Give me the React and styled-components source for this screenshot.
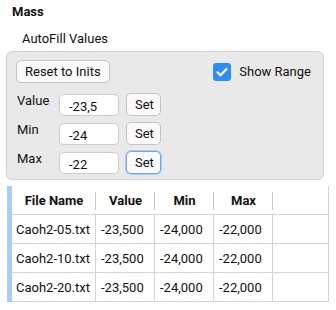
import styled, { createGlobalStyle } from "styled-components";

const Global = createGlobalStyle`
  body {
    margin: 0;
    background: #fff;
    font-family: Roboto, "Liberation Sans", sans-serif;
    font-size: 13px;
    color: #111;
  }
`;

const Page = styled.div`
  width: 336px;
  padding: 2px 7px 0 6px;
  box-sizing: border-box;
`;

const Title = styled.div`
  font-weight: bold;
  font-size: 13px;
  padding-left: 6px;
  height: 20px;
  line-height: 20px;
`;

const SubTitle = styled.div`
  padding-left: 16px;
  height: 25px;
  line-height: 25px;
  margin-top: 4px;
`;

const Panel = styled.div`
  margin-right: 5px;
  background: #e9e9e9;
  border: 1px solid #d2d2d2;
  border-radius: 6px;
  padding: 8px 9px 5px 9px;
  display: flex;
  flex-direction: column;
  gap: 6px;
`;

const TopRow = styled.div`
  display: flex;
  justify-content: space-between;
  align-items: center;
  margin-bottom: 4px;
`;

const Button = styled.button`
  font-family: inherit;
  font-size: 13px;
  color: #111;
  background: #fafafa;
  border: 1px solid ${(p) => (p.$focus ? "#6ea8ee" : "#c4c4c4")};
  box-shadow: ${(p) => (p.$focus ? "0 0 0 1px #a9cdf6" : "none")};
  border-radius: 5px;
  height: 23px;
  padding: 0 8px;
  line-height: 20px;
`;

const Check = styled.label`
  display: flex;
  align-items: center;
  gap: 8px;
  margin-right: 3px;
`;

const Box = styled.span`
  width: 18px;
  height: 18px;
  border-radius: 3px;
  background: #2f8ef4;
  display: flex;
  align-items: center;
  justify-content: center;
`;

const Field = styled.div`
  display: grid;
  grid-template-columns: 36px 60px 35px;
  column-gap: 7px;
  align-items: center;
`;

const Label = styled.span`
  align-self: start;
  line-height: 16px;
  padding-left: 1px;
`;

const Input = styled.div`
  height: 22px;
  line-height: 24px;
  background: #fff;
  border: 1px solid #cdcdcd;
  border-radius: 5px;
  padding-left: 9px;
  box-sizing: border-box;
`;

const Table = styled.table`
  margin: 6px 0 0 1px;
  width: 322px;
  border-collapse: separate;
  border-spacing: 0;
  border-left: 5px solid #a9cdf7;
  border-right: 1px solid #d4d4d4;
  table-layout: fixed;
`;

const Th = styled.th`
  height: 28px;
  text-align: center;
  font-weight: bold;
  padding: 0;
  position: relative;
  border-bottom: 1px solid #d4d4d4;
  &:not(:last-child)::after {
    content: "";
    position: absolute;
    right: 0;
    top: 6px;
    bottom: 4px;
    width: 1px;
    background: #c6c6c6;
  }
`;

const Td = styled.td`
  height: 28px;
  padding: 0 0 0 ${(p) => (p.$first ? 4 : 5)}px;
  border-bottom: 1px solid #d4d4d4;
  border-right: ${(p) => (p.$last ? "none" : "1px solid #d4d4d4")};
  white-space: nowrap;
`;

const rows = ["Caoh2-05.txt", "Caoh2-10.txt", "Caoh2-20.txt"];
const fields = [
  ["Value", "-23,5"],
  ["Min", "-24"],
  ["Max", "-22"],
];

export default function App() {
  return (
    <Page>
      <Global />
      <Title>Mass</Title>
      <SubTitle>AutoFill Values</SubTitle>
      <Panel>
        <TopRow>
          <Button>Reset to Inits</Button>
          <Check>
            <Box>
              <svg width="14" height="14" viewBox="0 0 14 14">
                <path d="M2.5 7.3l3 3 6-6.3" fill="none" stroke="#fff" strokeWidth="2.2" strokeLinecap="round" strokeLinejoin="round" />
              </svg>
            </Box>
            Show Range
          </Check>
        </TopRow>
        {fields.map(([l, v], i) => (
          <Field key={l}>
            <Label>{l}</Label>
            <Input>{v}</Input>
            <Button $focus={i === 2}>Set</Button>
          </Field>
        ))}
      </Panel>
      <Table>
        <colgroup>
          <col style={{ width: 84 }} />
          <col style={{ width: 59 }} />
          <col style={{ width: 59 }} />
          <col style={{ width: 59 }} />
          <col />
        </colgroup>
        <thead>
          <tr>
            <Th>File Name</Th>
            <Th>Value</Th>
            <Th>Min</Th>
            <Th>Max</Th>
            <Th />
          </tr>
        </thead>
        <tbody>
          {rows.map((r) => (
            <tr key={r}>
              <Td $first>{r}</Td>
              <Td>-23,500</Td>
              <Td>-24,000</Td>
              <Td>-22,000</Td>
              <Td $last />
            </tr>
          ))}
        </tbody>
      </Table>
    </Page>
  );
}
